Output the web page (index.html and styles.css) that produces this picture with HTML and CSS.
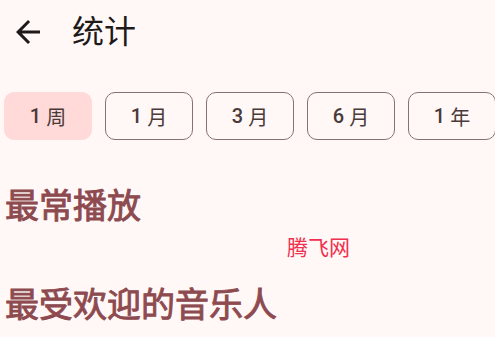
FILE: index.html
```html
<!DOCTYPE html>
<html lang="zh">
<head>
<meta charset="utf-8">
<link rel="stylesheet" href="styles.css">
</head>
<body>
<div class="page">
  <header class="topbar">
    <svg class="back" viewBox="0 0 24 24" width="36" height="36"><path d="M20 11H7.83l5.59-5.59L12 4l-8 8 8 8 1.41-1.41L7.83 13H20v-2z" fill="#1f1a1a"/></svg>
    <h1 class="title">统计</h1>
  </header>
  <div class="chips">
    <div class="chip selected"><span class="num">1</span> 周</div>
    <div class="chip"><span class="num">1</span> 月</div>
    <div class="chip"><span class="num">3</span> 月</div>
    <div class="chip"><span class="num">6</span> 月</div>
    <div class="chip"><span class="num">1</span> 年</div>
  </div>
  <h2 class="section">最常播放</h2>
  <h2 class="section second">最受欢迎的音乐人</h2>
  <div class="watermark">腾飞网</div>
</div>
</body>
</html>
```
FILE: styles.css
```css
html, body {
  margin: 0;
  padding: 0;
  background: #fff8f7;
}
.page {
  position: relative;
  width: 495px;
  height: 337px;
  overflow: hidden;
  font-family: Roboto, "Noto Sans CJK SC", sans-serif;
}
.topbar {
  display: flex;
  align-items: center;
  height: 64px;
  padding-left: 10px;
}
.back {
  display: block;
  width: 36px;
  height: 36px;
}
.title {
  margin: 0 0 0 26px;
  font-size: 32px;
  font-weight: 400;
  color: #1f1a1a;
  line-height: 1;
}
.chips {
  display: flex;
  gap: 13px;
  padding-left: 4px;
  margin-top: 28px;
  white-space: nowrap;
}
.chip {
  flex: none;
  box-sizing: border-box;
  width: 88px;
  height: 48px;
  border: 1px solid #857371;
  border-radius: 10px;
  display: flex;
  align-items: center;
  justify-content: center;
  gap: 5px;
  font-size: 20px;
  font-weight: 400;
  color: #4a3a3a;
}
.num {
  font-weight: 500;
}
.chip.selected {
  background: #ffdad9;
  border-color: #ffdad9;
}
.section {
  margin: 0;
  padding-left: 5px;
  font-size: 34px;
  font-weight: 400;
  -webkit-text-stroke: 0.9px #8d4a4f;
  line-height: 1.2;
  color: #8d4a4f;
  margin-top: 46px;
}
.section.second {
  margin-top: 58px;
}
.watermark {
  position: absolute;
  left: 287px;
  top: 236px;
  font-size: 21px;
  line-height: 1;
  font-family: "Noto Sans CJK SC", sans-serif;
  font-weight: 400;
  color: #f0304e;
}
```
